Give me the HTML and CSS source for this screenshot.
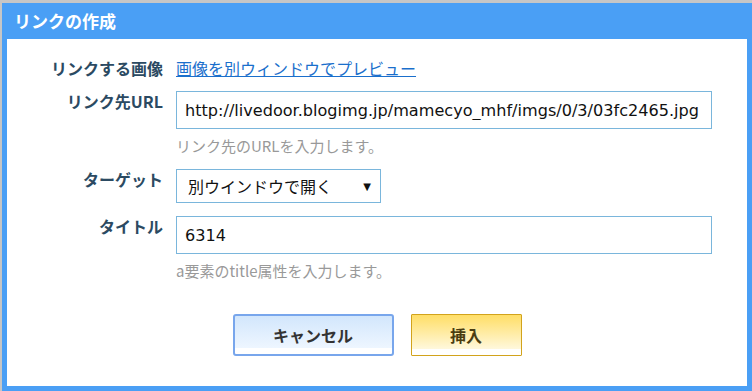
FILE: index.html
```html
<!DOCTYPE html>
<html lang="ja">
<head>
<meta charset="utf-8">
<title>リンクの作成</title>
<link rel="stylesheet" href="styles.css">
</head>
<body>
<div class="dialog">
  <div class="titlebar">リンクの作成</div>
  <div class="content">
    <div class="form">
      <div class="label">リンクする画像</div>
      <div class="field"><a class="preview" href="#">画像を別ウィンドウでプレビュー</a></div>

      <div class="label">リンク先URL</div>
      <div class="field">
        <input class="text wide" type="text" value="http://livedoor.blogimg.jp/mamecyo_mhf/imgs/0/3/03fc2465.jpg">
        <div class="hint">リンク先のURLを入力します。</div>
      </div>

      <div class="label">ターゲット</div>
      <div class="field">
        <div class="select"><span>別ウインドウで開く</span><span class="arrow">▼</span></div>
      </div>

      <div class="label">タイトル</div>
      <div class="field">
        <input class="text wide" type="text" value="6314">
        <div class="hint">a要素のtitle属性を入力します。</div>
      </div>
    </div>
    <div class="buttons">
      <button class="btn cancel" type="button">キャンセル</button>
      <button class="btn insert" type="button">挿入</button>
    </div>
  </div>
</div>
</body>
</html>
```
FILE: styles.css
```css
html, body {
  margin: 0;
  padding: 0;
}
body {
  background: #c6c6c6;
  padding: 3px 0 0 2px;
  width: 752px;
  height: 391px;
  box-sizing: border-box;
  overflow: hidden;
  font-family: "Open Sans", "Noto Sans CJK JP", sans-serif;
}
.dialog {
  width: 750px;
  height: 388px;
  box-sizing: border-box;
  background: #4a9ff5;
  padding: 0 5px 5px 5px;
  display: flex;
  flex-direction: column;
}
.titlebar {
  height: 36px;
  line-height: 36px;
  padding-left: 7px;
  color: #ffffff;
  font-weight: bold;
  font-size: 17px;
  font-family: "Noto Sans CJK JP", sans-serif;
}
.content {
  flex: 1;
  background: #ffffff;
  padding-top: 19px;
}
.form {
  display: grid;
  grid-template-columns: 156px 536px;
  column-gap: 13px;
  row-gap: 13px;
}
.label {
  text-align: right;
  font-weight: bold;
  font-size: 16px;
  line-height: 20px;
  color: #2b4a62;
  font-family: "Noto Sans CJK JP", sans-serif;
}
.field {
  display: flex;
  flex-direction: column;
  align-items: flex-start;
}
.preview {
  font-size: 16px;
  line-height: 20px;
  color: #1a6fcc;
  text-decoration: underline;
  font-family: "Noto Sans CJK JP", sans-serif;
}
.text {
  box-sizing: border-box;
  height: 38px;
  border: 1px solid #7ab6dc;
  border-radius: 0;
  padding: 0 3px 0 8px;
  font-family: "DejaVu Sans", "Noto Sans CJK JP", sans-serif;
  font-size: 16.1px;
  color: #111;
  background: #fff;
  outline: none;
  margin: 0;
}
.wide {
  width: 536px;
}
.hint {
  margin-top: 7px;
  font-size: 15px;
  line-height: 20px;
  color: #999999;
  font-family: "Noto Sans CJK JP", sans-serif;
}
.select {
  box-sizing: border-box;
  width: 205px;
  height: 34px;
  border: 1px solid #7ab6dc;
  padding: 0 9px 0 11px;
  display: flex;
  align-items: center;
  justify-content: space-between;
  font-size: 16px;
  color: #111;
  font-family: "Noto Sans CJK JP", sans-serif;
}
.arrow {
  font-size: 10px;
  color: #111;
  font-family: "DejaVu Sans", sans-serif;
}
.buttons {
  display: flex;
  justify-content: center;
  gap: 17px;
  margin-top: 33px;
}
.btn {
  box-sizing: border-box;
  height: 42px;
  font-size: 16px;
  font-weight: bold;
  font-family: "Noto Sans CJK JP", sans-serif;
  cursor: pointer;
  margin: 0;
  padding: 0;
}
.cancel {
  width: 161px;
  border: 2px solid #78a6ec;
  border-radius: 3px;
  background: linear-gradient(#d2e6fc, #eef6ff 85%, #ffffff 85%);
  color: #333333;
}
.insert {
  width: 111px;
  border: 1px solid #d2a31c;
  border-radius: 1px;
  background: linear-gradient(#ffde66, #fff8dc 85%, #ffffff 85%);
  color: #4a3c10;
}
```
